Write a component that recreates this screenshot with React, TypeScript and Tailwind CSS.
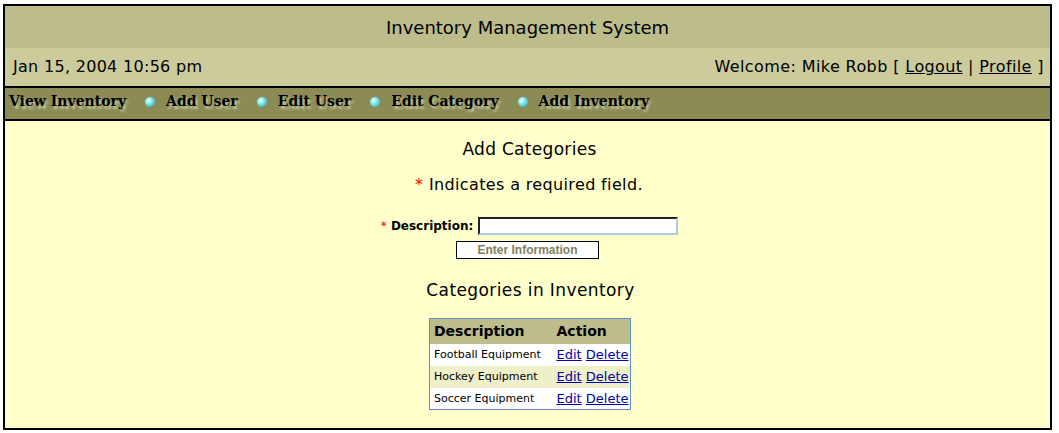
import React from "react";

const verdana = { fontFamily: '"DejaVu Sans", Verdana, sans-serif' };

function Bullet() {
  return (
    <span className="inline-block w-[10px] h-[10px] rounded-full bg-[radial-gradient(circle_at_35%_35%,#e8ffff_0%,#6fe0e8_45%,#2a9aa8_100%)] ml-[19px] mr-[11px] mt-[2px]" />
  );
}

export default function App() {
  const navItems = ["View Inventory", "Add User", "Edit User", "Edit Category", "Add Inventory"];
  const rows = [
    { name: "Football Equipment", bg: "bg-white" },
    { name: "Hockey Equipment", bg: "bg-[#efefc9]" },
    { name: "Soccer Equipment", bg: "bg-white" },
  ];
  return (
    <div className="w-[1059px] h-[433px] bg-white pt-[4px] pl-[3px]" style={verdana}>
      <div className="w-[1049px] h-[426px] border-2 border-black flex flex-col bg-[#ffffcc]">
        <div className="h-[42px] bg-[#bdbc8b] flex items-center justify-center text-[18px] text-black shrink-0">
          Inventory Management System
        </div>
        <div className="h-[40px] bg-[#cbcb9b] border-b-2 border-black flex items-center justify-between pl-[8px] pr-[6px] text-[16px] text-black shrink-0">
          <span className="tracking-[0.3px]">Jan 15, 2004 10:56 pm</span>
          <span className="tracking-[0.4px]">
            Welcome: Mike Robb [ <span className="underline">Logout</span> | <span className="underline">Profile</span> ]
          </span>
        </div>
        <div
          className="h-[33px] bg-[#8b8b55] border-b-2 border-black flex items-center pl-[4px] pb-[5px] text-[14px] font-bold text-black shrink-0 [text-shadow:2px_3px_2px_#c4c49a]"
          style={{ fontFamily: '"DejaVu Serif", "Liberation Serif", serif' }}
        >
          {navItems.map((item, i) => (
            <React.Fragment key={item}>
              {i > 0 && <Bullet />}
              <span>{item}</span>
            </React.Fragment>
          ))}
        </div>
        <div className="flex-1 flex flex-col items-center">
          <div className="mt-[17px] text-[17px] tracking-[0.3px] text-black leading-[22px] ml-[4px]">Add Categories</div>
          <div className="mt-[14px] text-[16px] tracking-[0.36px] text-black leading-[22px] ml-[3px]">
            <span className="text-[#ff0000]">*</span> Indicates a required field.
          </div>
          <div className="mt-[21px] flex items-center ml-[4px]">
            <span className="text-[12px] font-bold text-black">
              <span className="text-[#ff0000] font-normal">*</span> Description:
            </span>
            <div className="ml-[5px] w-[200px] h-[18px] bg-white border-t-2 border-l-2 border-t-[#222222] border-l-[#222222] border-r-2 border-b-2 border-r-[#b0cce0] border-b-[#b0cce0]" />
          </div>
          <div
            className="mt-[6px] w-[143px] h-[18px] bg-white border border-black flex items-center justify-center text-[12px] font-bold text-[#808060]"
            style={{ fontFamily: '"Liberation Sans", Arial, sans-serif' }}
          >
            Enter Information
          </div>
          <div className="mt-[20px] text-[17px] tracking-[0.4px] text-black leading-[22px] ml-[6px]">Categories in Inventory</div>
          <table className="mt-[17px] border border-[#5d8fcc] border-collapse ml-[5px] table-fixed w-[202px]">
            <thead>
              <tr className="bg-[#bdbc8b] h-[25px]">
                <th className="text-left font-bold text-[14px] pl-[4px] text-black w-[127px]">Description</th>
                <th className="text-left font-bold text-[14px] pl-[0px] text-black w-[74px]">Action</th>
              </tr>
            </thead>
            <tbody>
              {rows.map((r) => (
                <tr key={r.name} className={`${r.bg} h-[22px]`}>
                  <td className="text-[11px] pl-[4px] pt-[2px] text-black">{r.name}</td>
                  <td className="text-[13px] pt-[1px] text-[#0000aa] whitespace-nowrap">
                    <span className="underline">Edit</span> <span className="underline">Delete</span>
                  </td>
                </tr>
              ))}
            </tbody>
          </table>
        </div>
      </div>
    </div>
  );
}
